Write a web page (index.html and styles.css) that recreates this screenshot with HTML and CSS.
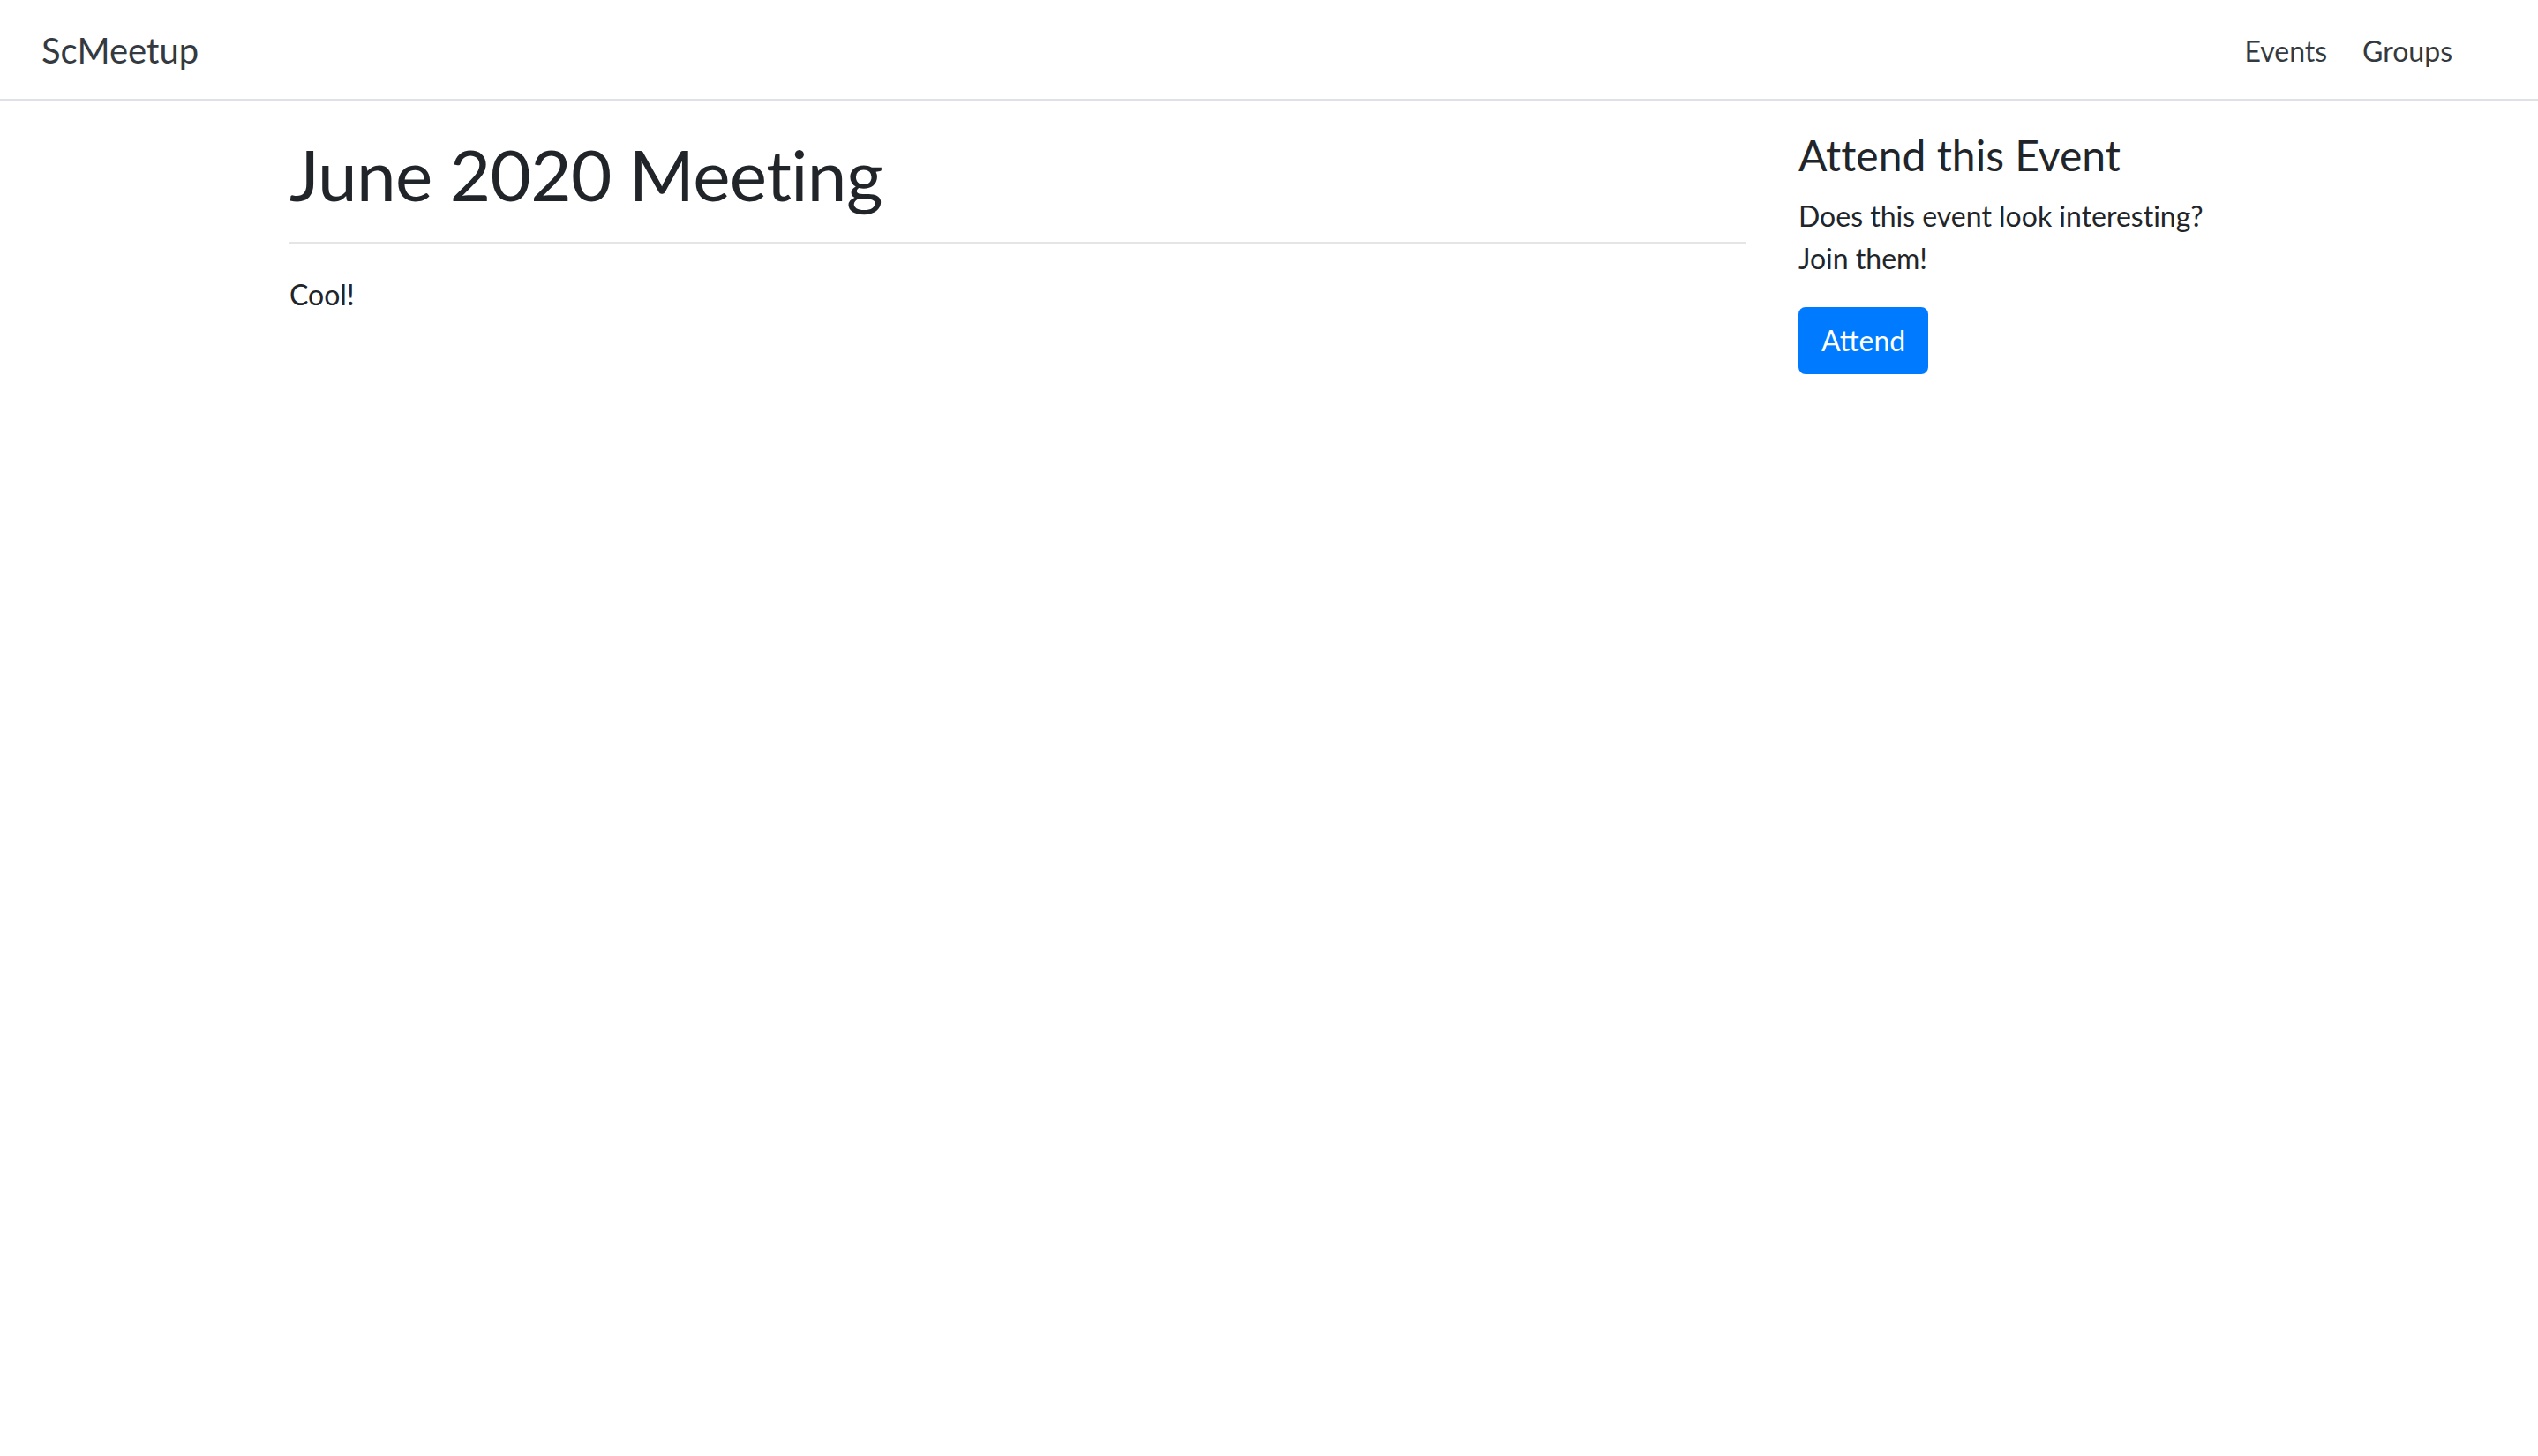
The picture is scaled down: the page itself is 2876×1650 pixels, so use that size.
FILE: index.html
```html
<!DOCTYPE html>
<html lang="en">
<head>
<meta charset="utf-8">
<title>June 2020 Meeting - ScMeetup</title>
<link rel="stylesheet" href="styles.css">
</head>
<body>
<nav class="navbar">
  <a class="brand" href="#">ScMeetup</a>
  <ul class="nav">
    <li><a class="nav-link" href="#">Events</a></li>
    <li><a class="nav-link" href="#">Groups</a></li>
  </ul>
</nav>
<main class="container">
  <div class="row">
    <section class="col col-main">
      <h1 class="title">June 2020 Meeting</h1>
      <hr class="divider">
      <p class="text text-main">Cool!</p>
    </section>
    <aside class="col col-side">
      <h4 class="side-title">Attend this Event</h4>
      <p class="text text-side">Does this event look interesting? Join them!</p>
      <button class="btn-primary" type="button">Attend</button>
    </aside>
  </div>
</main>
</body>
</html>
```
FILE: styles.css
```css
html, body {
  margin: 0;
  background: #fff;
}
body {
  font-family: Lato, "Segoe UI", "Noto Sans", sans-serif;
  font-size: 32px;
  line-height: 1.5;
  color: #212529;
  font-variant-ligatures: none;
}
.navbar {
  display: flex;
  align-items: center;
  justify-content: space-between;
  padding: 16px 97px 16px 47px;
  border-bottom: 2px solid #dee2e6;
}
.brand {
  display: inline-block;
  font-size: 40px;
  line-height: 60px;
  padding: 11px 0 9px;
  color: #343a40;
  text-decoration: none;
}
.nav {
  display: flex;
  list-style: none;
  margin: 0;
  padding: 0;
  gap: 40px;
}
.nav-link {
  display: block;
  padding: 18px 0 14px;
  color: #343a40;
  text-decoration: none;
}
.container {
  width: 2220px;
  margin: 0 auto;
  padding: 0 30px;
}
.row {
  display: grid;
  grid-template-columns: minmax(0, 9fr) minmax(0, 3fr);
  margin: 32px -30px 0;
}
.col {
  padding: 0 30px;
}
.title {
  font-size: 80px;
  font-weight: 400;
  line-height: 96px;
  letter-spacing: -0.6px;
  padding-top: 3px;
  margin: 0 0 16px;
}
.divider {
  border: 0;
  border-top: 2px solid rgba(0, 0, 0, 0.1);
  height: 0;
  margin: 29px 0 32px;
}
.text {
  margin: 0 0 32px;
}
.text-main {
  padding-top: 2px;
}
.text-side {
  padding-top: 1px;
  margin-bottom: 31px;
}
.side-title {
  font-size: 48px;
  font-weight: 400;
  line-height: 1.2;
  padding-top: 1px;
  margin: 0 0 15px;
}
.btn-primary {
  display: inline-block;
  font-family: inherit;
  font-size: 32px;
  line-height: 48px;
  padding: 12px 24px;
  border: 2px solid #007bff;
  border-radius: 8px;
  background: #007bff;
  color: #fff;
  cursor: pointer;
}
```
